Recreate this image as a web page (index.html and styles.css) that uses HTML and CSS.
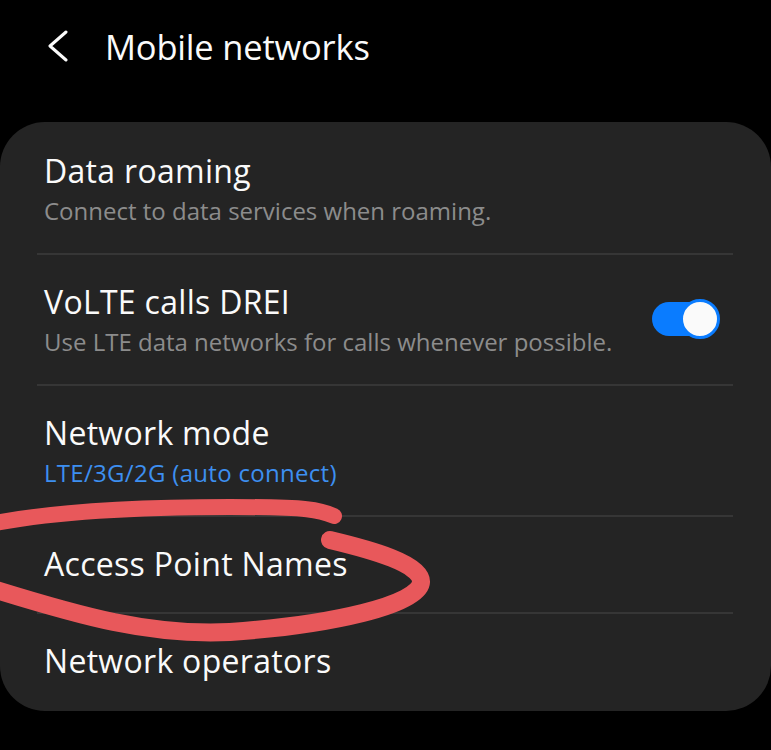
FILE: index.html
```html
<!DOCTYPE html>
<html lang="en">
<head>
<meta charset="utf-8">
<title>Mobile networks</title>
<link rel="stylesheet" href="styles.css">
</head>
<body>
<header class="topbar">
  <span class="back">
    <svg width="24" height="34" viewBox="0 0 24 34"><polyline points="19,2 3,16 19,30" fill="none" stroke="#fafafa" stroke-width="3" stroke-linecap="round" stroke-linejoin="round"/></svg>
  </span>
  <h1 class="title">Mobile networks</h1>
</header>
<main class="card">
  <div class="row">
    <div class="text">
      <div class="label">Data roaming</div>
      <div class="sub">Connect to data services when roaming.</div>
    </div>
  </div>
  <div class="row">
    <div class="text">
      <div class="label">VoLTE calls DREI</div>
      <div class="sub">Use LTE data networks for calls whenever possible.</div>
    </div>
    <span class="switch"><span class="track"></span><span class="thumb"></span></span>
  </div>
  <div class="row">
    <div class="text">
      <div class="label">Network mode</div>
      <div class="sub blue">LTE/3G/2G (auto connect)</div>
    </div>
  </div>
  <div class="row">
    <div class="text">
      <div class="label">Access Point Names</div>
    </div>
  </div>
  <div class="row last">
    <div class="text">
      <div class="label">Network operators</div>
    </div>
  </div>
</main>
<svg class="scribble" width="771" height="750" viewBox="0 0 771 750">
  <path d="M -10 524 C 60 510, 150 507, 230 507 S 320 510, 334 516" fill="none" stroke="#e8585b" stroke-width="16" stroke-linecap="round"/>
  <path d="M 330 540 C 372 550, 422 564, 421 582 C 420 605, 330 625, 230 632 C 150 636, 80 616, -10 588" fill="none" stroke="#e8585b" stroke-width="18" stroke-linecap="round"/>
</svg>
</body>
</html>
```
FILE: styles.css
```css
html, body {
  margin: 0;
  padding: 0;
  background: #000;
}
body {
  width: 771px;
  height: 750px;
  overflow: hidden;
  position: relative;
  font-family: "Open Sans", "Noto Sans", sans-serif;
  color: #fafafa;
}
.topbar {
  display: flex;
  align-items: center;
  height: 48px;
  padding-top: 23px;
  margin-bottom: 51px;
}
.back {
  display: flex;
  margin-left: 47px;
  width: 24px;
}
.title {
  margin: 0 0 0 34px;
  font-size: 34.5px;
  line-height: 48px;
  font-weight: 400;
  letter-spacing: -0.2px;
}
.card {
  background: #242424;
  border-radius: 45px;
  height: 589px;
  padding-top: 2px;
  box-sizing: border-box;
}
.row {
  display: flex;
  align-items: center;
  margin: 0 38px 0 37px;
  padding: 27px 13px 28px 7px;
  border-bottom: 2px solid #363636;
}
.row.last {
  border-bottom: none;
}
.text {
  flex: 1;
  display: flex;
  flex-direction: column;
  gap: 6px;
}
.label {
  font-size: 32px;
  line-height: 40px;
  letter-spacing: 0.3px;
}
.sub {
  font-size: 24px;
  line-height: 28px;
  color: #8c8c8c;
}
.sub.blue {
  color: #3d8ff0;
  letter-spacing: 0.3px;
}
.switch {
  position: relative;
  width: 68px;
  height: 40px;
  display: block;
}
.track {
  position: absolute;
  left: 0;
  top: 3px;
  width: 62px;
  height: 34px;
  border-radius: 17px;
  background: #0a7cff;
}
.thumb {
  position: absolute;
  right: 0;
  top: 0;
  width: 34px;
  height: 34px;
  border-radius: 50%;
  background: #fafafa;
  border: 3px solid #0a7cff;
}
.scribble {
  position: absolute;
  left: 0;
  top: 0;
  pointer-events: none;
}
```
